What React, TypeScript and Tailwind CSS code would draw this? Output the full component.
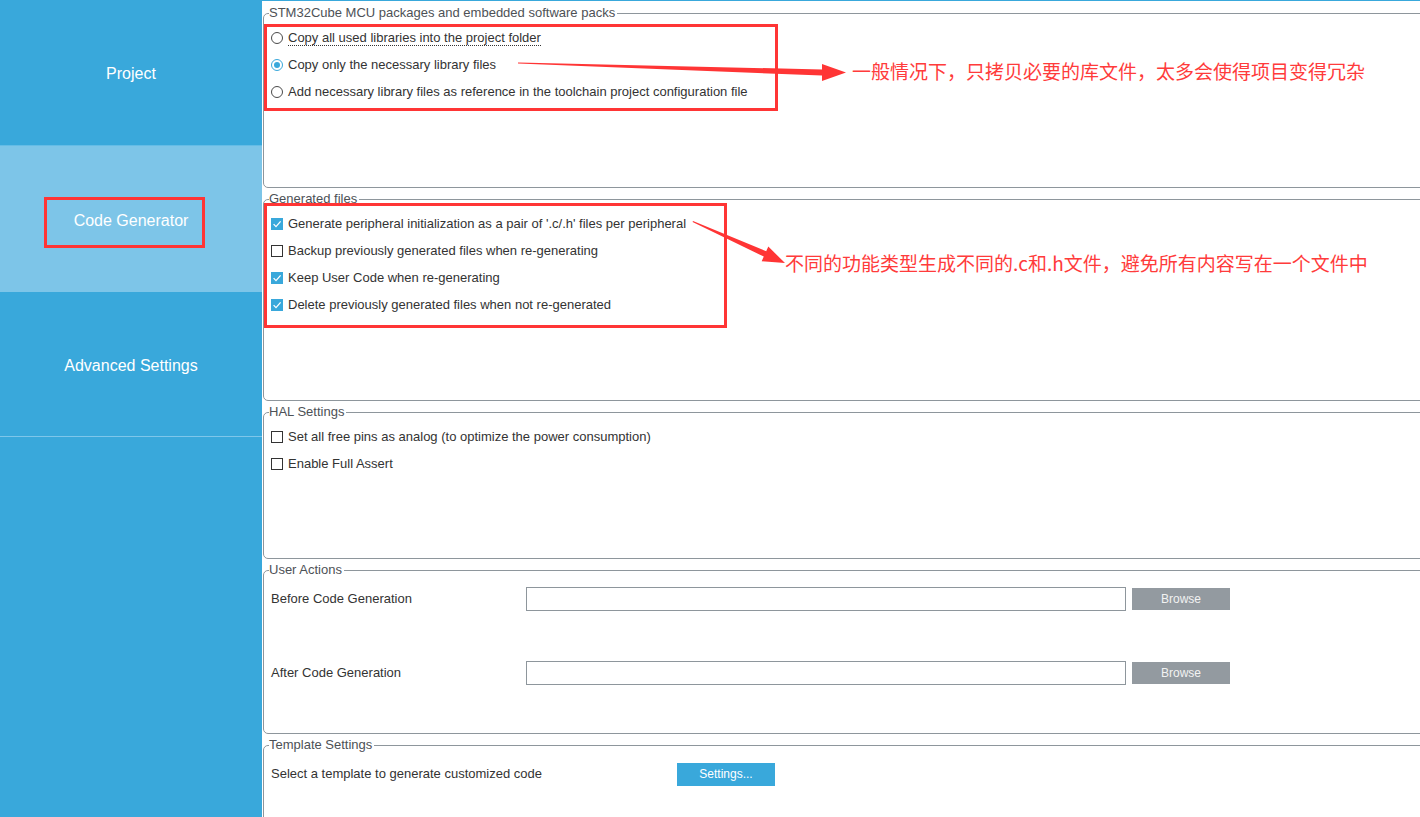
import type { ReactNode } from 'react';

const UI = "font-['Liberation_Sans',Arial,sans-serif]";
const CJK = "font-['Noto_Sans_CJK_SC','Noto_Sans',sans-serif]";

function Radio({ checked = false }: { checked?: boolean }) {
  return checked ? (
    <span className="flex h-3 w-3 items-center justify-center rounded-full border border-[#39a8db] bg-white">
      <span className="h-[6px] w-[6px] rounded-full bg-[#39a8db]" />
    </span>
  ) : (
    <span className="h-3 w-3 rounded-full border border-[#4a4a4a] bg-white" />
  );
}

function Check({ checked = false }: { checked?: boolean }) {
  return checked ? (
    <span className="flex h-3 w-3 items-center justify-center bg-[#39a8db]">
      <svg viewBox="0 0 12 12" className="h-3 w-3">
        <path d="M2.6 6.1 L5 8.6 L9.6 3.4" stroke="#fff" strokeWidth="1.3" fill="none" />
      </svg>
    </span>
  ) : (
    <span className="h-3 w-3 border border-[#333] bg-white" />
  );
}

function Group({ title, className, children }: { title: string; className: string; children: ReactNode }) {
  return (
    <fieldset
      className={`ml-[1px] w-[calc(100%+20px)] shrink-0 rounded-[5px] border border-[#8e969c] px-[5px] ${className}`}
    >
      <legend className="pr-[2px] text-[13px] leading-[14px] text-[#4d5156]">{title}</legend>
      {children}
    </fieldset>
  );
}

function Option({ control, children }: { control: ReactNode; children: ReactNode }) {
  return (
    <div className="flex h-[27px] items-center gap-[5px] pl-[2px] text-[13px] text-[#333]">
      {control}
      {children}
    </div>
  );
}

const NAV = [
  { label: 'Project', cls: 'h-[146px] border-b border-[#64bce6] bg-[#39a8db]' },
  { label: 'Code Generator', cls: 'h-[146px] bg-[#7dc5e8]' },
  { label: 'Advanced Settings', cls: 'h-[145px] border-b border-[#7ec6ea] bg-[#39a8db]' },
];

export default function App() {
  return (
    <div className={`relative flex h-[817px] w-full overflow-hidden bg-white ${UI}`}>
      <aside className="flex w-[262px] shrink-0 flex-col bg-[#39a8db]">
        {NAV.map((n) => (
          <div
            key={n.label}
            className={`flex items-center justify-center pt-[3px] text-[16px] text-white ${n.cls}`}
          >
            {n.label}
          </div>
        ))}
      </aside>

      <main className="flex flex-1 flex-col gap-1 overflow-hidden border-t border-[#39a8db] pt-[5px]">
        <Group title="STM32Cube MCU packages and embedded software packs" className="h-[182px]">
          <div className="pt-[4px]">
            <Option control={<Radio />}>
              <span className="border-b border-dotted border-[#333] leading-[15px]">
                Copy all used libraries into the project folder
              </span>
            </Option>
            <Option control={<Radio checked />}>Copy only the necessary library files</Option>
            <Option control={<Radio />}>
              Add necessary library files as reference in the toolchain project configuration file
            </Option>
          </div>
        </Group>

        <Group title="Generated files" className="h-[209px]">
          <div className="pt-[4px]">
            <Option control={<Check checked />}>
              Generate peripheral initialization as a pair of '.c/.h' files per peripheral
            </Option>
            <Option control={<Check />}>Backup previously generated files when re-generating</Option>
            <Option control={<Check checked />}>Keep User Code when re-generating</Option>
            <Option control={<Check checked />}>Delete previously generated files when not re-generated</Option>
          </div>
        </Group>

        <Group title="HAL Settings" className="h-[154px]">
          <div className="pt-[4px]">
            <Option control={<Check />}>Set all free pins as analog (to optimize the power consumption)</Option>
            <Option control={<Check />}>Enable Full Assert</Option>
          </div>
        </Group>

        <Group title="User Actions" className="h-[171px]">
          <div className="flex flex-col gap-[50px] pt-[10px] pl-[2px] text-[13px] text-[#333]">
            {['Before Code Generation', 'After Code Generation'].map((l) => (
              <div key={l} className="flex h-[24px] items-center">
                <span className="w-[255px]">{l}</span>
                <div className="h-[24px] w-[600px] border border-[#8e969c] bg-white" />
                <button className="ml-[6px] h-[22px] w-[98px] bg-[#939aa0] text-[12px] text-[#f2f2f2]">
                  Browse
                </button>
              </div>
            ))}
          </div>
        </Group>

        <Group title="Template Settings" className="h-[120px]">
          <div className="mt-[10px] flex h-[24px] items-center pl-[2px] text-[13px] text-[#333]">
            <span className="w-[406px]">Select a template to generate customized code</span>
            <button className="h-[23px] w-[98px] bg-[#39a8db] text-[12px] text-white">Settings...</button>
          </div>
        </Group>
      </main>

      {/* annotations drawn over the screenshot */}
      <div className="pointer-events-none absolute inset-0">
        <div className="absolute left-[44px] top-[197px] h-[51px] w-[161px] border-[3px] border-[#ff3535]" />
        <div className="absolute left-[264px] top-[24px] h-[87px] w-[514px] border-[3px] border-[#ff3535]" />
        <div className="absolute left-[264px] top-[203px] h-[125px] w-[463px] border-[3px] border-[#ff3535]" />

        <svg className="absolute inset-0 h-full w-full" viewBox="0 0 1420 817">
          <polygon
            fill="#ff3535"
            points="518,62.5 822,69.5 822,64 846,72.5 822,81 822,75.5 518,63.6"
          />
          <polygon
            fill="#ff3535"
            points="693,221 766.2,251.2 768.3,246.6 785,263 761.7,261.2 763.8,256.6 692.6,222"
          />
        </svg>

        <div className={`absolute left-[852px] top-[60px] text-[19px] leading-[22px] text-[#ff3b3b] ${CJK}`}>
          一般情况下，只拷贝必要的库文件，太多会使得项目变得冗杂
        </div>
        <div className={`absolute left-[785px] top-[252px] text-[19px] leading-[22px] text-[#ff3b3b] ${CJK}`}>
          不同的功能类型生成不同的.c和.h文件，避免所有内容写在一个文件中
        </div>
      </div>
    </div>
  );
}
